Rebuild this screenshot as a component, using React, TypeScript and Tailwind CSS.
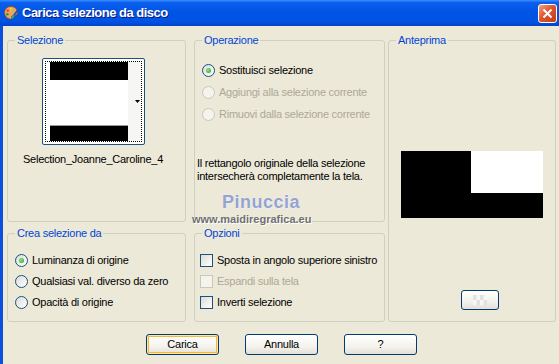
import clsx from "clsx"

const font = "font-['Liberation_Sans',Arial,sans-serif]"

function Radio({ label, checked, disabled }: { label: string; checked?: boolean; disabled?: boolean }) {
  return (
    <div className="flex items-center h-[13px]">
      <span
        className={clsx(
          "w-[13px] h-[13px] rounded-full border flex items-center justify-center shrink-0",
          disabled
            ? "border-[#CAC8BB] bg-[#F4F3EC]"
            : "border-[#1C5180] bg-[linear-gradient(135deg,#DCDCD5,#FFFFFF)]"
        )}
      >
        {checked && (
          <span className="w-[5px] h-[5px] rounded-full bg-[radial-gradient(circle_at_40%_40%,#8BE88B,#1E9A1E)]" />
        )}
      </span>
      <span className={clsx("ml-[4px] leading-[13px] whitespace-nowrap", disabled ? "text-[#ACA899]" : "text-black")}>
        {label}
      </span>
    </div>
  )
}

function Check({ label, disabled }: { label: string; disabled?: boolean }) {
  return (
    <div className="flex items-center h-[13px]">
      <span
        className={clsx(
          "w-[13px] h-[13px] border shrink-0",
          disabled
            ? "border-[#CAC8BB] bg-[#F4F3EC]"
            : "border-[#1C5180] bg-[linear-gradient(135deg,#DCDCD5,#FFFFFF)]"
        )}
      />
      <span className={clsx("ml-[4px] leading-[13px] whitespace-nowrap", disabled ? "text-[#ACA899]" : "text-black")}>
        {label}
      </span>
    </div>
  )
}

function Group({ title, className, children }: { title: string; className?: string; children: React.ReactNode }) {
  return (
    <fieldset className={clsx("border border-[#D0D0BF] rounded-[3px] min-w-0", className)}>
      <legend className="ml-[7px] px-[2px] leading-[13px] text-[#0046D5]">{title}</legend>
      {children}
    </fieldset>
  )
}

function XpButton({ label, isDefault }: { label: string; isDefault?: boolean }) {
  return (
    <button
      className={clsx(
        "w-[73px] h-[21px] rounded-[3px] border border-[#003C74] bg-[linear-gradient(to_bottom,#FFFFFF,#F4F3EE_60%,#E3E0D5)] text-black leading-[13px]",
        isDefault && "shadow-[inset_0_0_0_1px_#FFE7A2,inset_0_0_0_2px_#F6B53C]"
      )}
    >
      {label}
    </button>
  )
}

export default function App() {
  return (
    <div className={clsx("w-[559px] h-[364px] bg-[#ECE9D8] relative overflow-hidden flex flex-col text-[11px] tracking-[-0.25px]", font)}>
      {/* barra del titolo */}
      <div className="h-[26px] shrink-0 flex items-center bg-[linear-gradient(to_bottom,#3D8EFF_0%,#0A5FEF_10%,#0055E5_45%,#0052E2_85%,#0343C9_100%)]">
        <svg className="ml-[3px] shrink-0" width="16" height="16" viewBox="0 0 16 16">
          <path
            d="M8 1.5C4.2 1.5 1.5 4 1.5 7.6c0 3.4 2.6 6.4 6 6.4 1.2 0 1.6-.8 1.2-1.6-.4-.8 0-1.6 1-1.6h1.5c2.2 0 3.3-1.4 3.3-3.3C14.5 4 11.6 1.5 8 1.5z"
            fill="#E9A660"
            stroke="#8A4A1A"
            strokeWidth="0.8"
          />
          <circle cx="4.8" cy="5.6" r="1.2" fill="#E23A2A" />
          <circle cx="8" cy="4" r="1.2" fill="#F4D21E" />
          <circle cx="4.4" cy="9.2" r="1.2" fill="#2C8F3A" />
          <path d="M9.2 12.6 L14.6 5.4" stroke="#1F56B8" strokeWidth="1.8" strokeLinecap="round" />
          <path d="M9.2 12.6 L10.4 11" stroke="#3DB34A" strokeWidth="2" strokeLinecap="round" />
        </svg>
        <span className="ml-[3px] text-white font-bold text-[13px] tracking-[-0.5px] [text-shadow:1px_1px_#0A1883]">
          Carica selezione da disco
        </span>
        <div className="ml-auto mr-[2px] w-[19px] h-[19px] rounded-[3px] border border-white bg-[linear-gradient(135deg,#F2A283,#E0552F_45%,#C33A1B)] flex items-center justify-center">
          <svg width="11" height="11" viewBox="0 0 11 11">
            <path d="M1.5 1.5 L9.5 9.5 M9.5 1.5 L1.5 9.5" stroke="white" strokeWidth="2" />
          </svg>
        </div>
      </div>

      {/* corpo */}
      <div className="flex-1 border-l-[3px] border-[#0A4FDD] pl-[4px] pt-[8px] flex flex-col">
        <div className="flex">
          <div className="grid grid-cols-[179px_191px] grid-rows-[188px_95px] gap-x-[8px] gap-y-[5px]">
            <Group title="Selezione" className="h-[188px]">
              <div className="flex flex-col items-center pr-[7px]">
                <div className="mt-[11px] w-[103px] h-[87px] rounded-[2px] border border-[#1C5180] bg-white p-[2px]">
                  <div className="w-full h-full border border-dotted border-black flex pl-[4px]">
                    <div className="w-[78px] flex flex-col">
                      <div className="h-[18px] bg-black" />
                      <div className="flex-1 bg-white" />
                      <div className="h-[1px] bg-[#9A9A9A]" />
                      <div className="h-[15px] bg-black" />
                    </div>
                    <div className="flex-1 bg-[#F6F6F4] flex items-center justify-end pr-[1px]">
                      <svg width="5" height="3" viewBox="0 0 5 3">
                        <path d="M0 0 H5 L2.5 3 Z" fill="black" />
                      </svg>
                    </div>
                  </div>
                </div>
                <div className="mt-[8px] leading-[13px] text-black whitespace-nowrap">Selection_Joanne_Caroline_4</div>
              </div>
            </Group>

            <Group title="Operazione" className="h-[188px]">
              <div className="flex flex-col pl-[7px] pt-[17px] gap-[9px]">
                <Radio label="Sostituisci selezione" checked />
                <Radio label="Aggiungi alla selezione corrente" disabled />
                <Radio label="Rimuovi dalla selezione corrente" disabled />
              </div>
              <p className="mt-[36px] pl-[2px] leading-[13px] text-black">
                Il rettangolo originale della selezione
                <br />
                intersecherà completamente la tela.
              </p>
            </Group>

            <Group title="Crea selezione da" className="h-[95px]">
              <div className="flex flex-col pl-[7px] pt-[14px] gap-[8px]">
                <Radio label="Luminanza di origine" checked />
                <Radio label="Qualsiasi val. diverso da zero" />
                <Radio label="Opacità di origine" />
              </div>
            </Group>

            <Group title="Opzioni" className="h-[95px]">
              <div className="flex flex-col pl-[5px] pt-[14px] gap-[8px]">
                <Check label="Sposta in angolo superiore sinistro" />
                <Check label="Espandi sulla tela" disabled />
                <Check label="Inverti selezione" />
              </div>
            </Group>
          </div>

          <Group title="Anteprima" className="ml-[3px] w-[168px] h-[288px]">
            <div className="flex flex-col">
              <div className="mt-[104px] mx-auto w-[142px] h-[67px] flex">
                <div className="w-[70px] bg-black" />
                <div className="flex-1 flex flex-col">
                  <div className="h-[42px] bg-white" />
                  <div className="flex-1 bg-black" />
                </div>
              </div>
              <div className="mt-[72px] ml-[72px] w-[38px] h-[20px] rounded-[3px] border border-[#003C74] bg-[linear-gradient(to_bottom,#FFFFFF,#F2F1EC_60%,#E3E0D5)] flex items-center justify-center">
                <svg width="14" height="10" viewBox="0 0 14 10">
                  <rect x="0" y="0" width="14" height="10" fill="#F7F7F7" />
                  <rect x="0" y="0" width="3.5" height="5" fill="#E2E2E2" />
                  <rect x="7" y="0" width="3.5" height="5" fill="#E2E2E2" />
                  <rect x="3.5" y="5" width="3.5" height="5" fill="#E2E2E2" />
                  <rect x="10.5" y="5" width="3.5" height="5" fill="#E2E2E2" />
                </svg>
              </div>
            </div>
          </Group>
        </div>

        <div className="mt-[12px] flex justify-center gap-[26px] pr-[3px]">
          <XpButton label="Carica" isDefault />
          <XpButton label="Annulla" />
          <XpButton label="?" />
        </div>
      </div>

      {/* filigrana */}
      <div className="absolute left-[222px] top-[193px] text-[18px] leading-none font-bold tracking-[0.5px] text-[#96A3CC] [text-shadow:0_0_1px_#FFFFFF,1px_1px_0_#E8ECF6]">
        Pinuccia
      </div>
      <div className="absolute left-[192px] top-[214px] text-[11px] leading-none font-bold tracking-[0px] text-[#707070] [text-shadow:1px_1px_0_#FFFFFF]">
        www.maidiregrafica.eu
      </div>
    </div>
  )
}
